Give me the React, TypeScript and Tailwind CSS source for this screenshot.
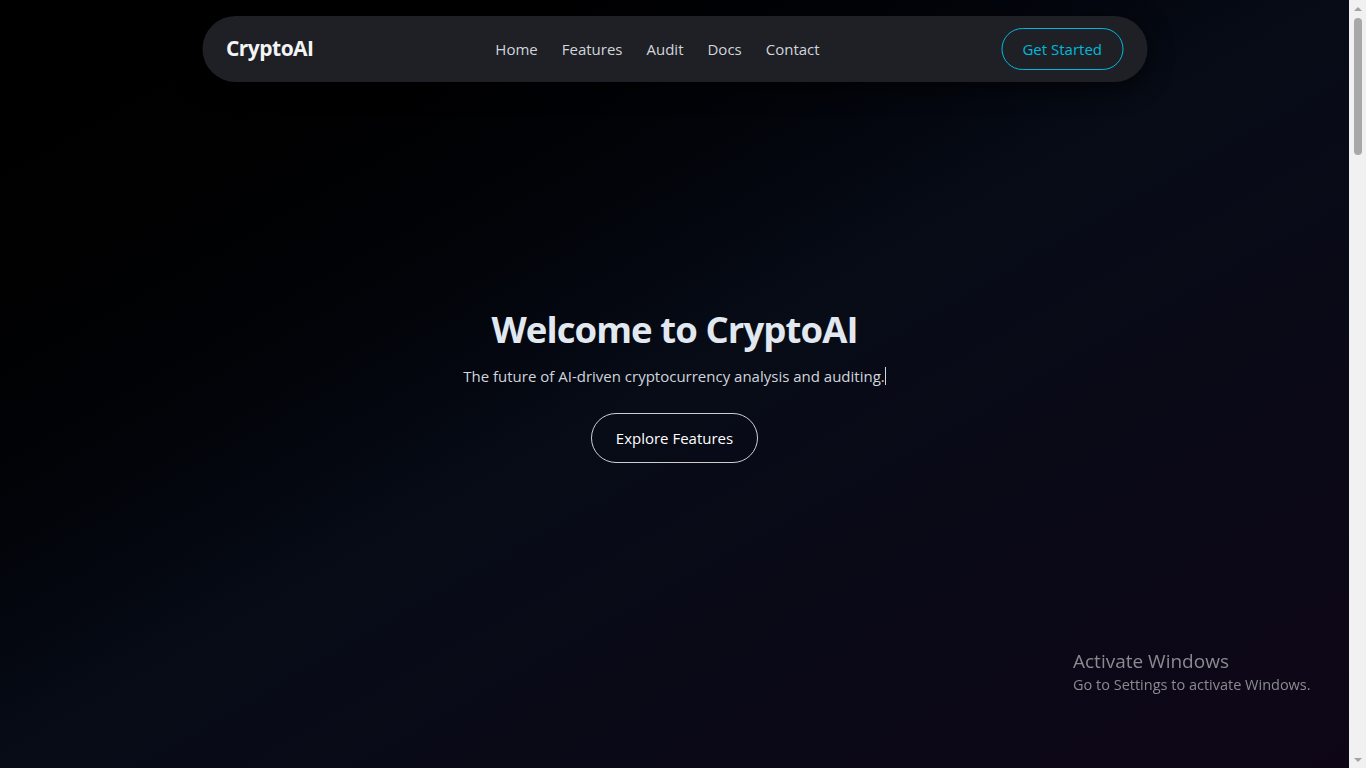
import React from "react";

const links = ["Home", "Features", "Audit", "Docs", "Contact"];

const Navbar = () => {
  return (
    <header className="absolute top-4 left-1/2 -translate-x-1/2 z-20 w-[945px] h-[66px] rounded-full bg-[#1e2025] shadow-[0_6px_24px_rgba(0,0,0,0.6)] px-6 flex items-center justify-between">
      <span className="text-[21px] font-bold text-gray-100 tracking-tight">CryptoAI</span>
      <nav className="flex items-center gap-6">
        {links.map((l) => (
          <a key={l} href="#" className="text-[15px] text-gray-300 hover:text-white">
            {l}
          </a>
        ))}
      </nav>
      <button className="h-[42px] px-5 rounded-full border border-cyan-500 text-[15px] text-cyan-500">
        Get Started
      </button>
    </header>
  );
};

// the page's scrollbar, as seen in the capture
const ScrollBar = () => {
  return (
    <div className="w-[17px] h-screen shrink-0 bg-[#f1f1f1] flex flex-col items-center">
      <div className="h-[17px] flex items-center justify-center">
        <div className="w-0 h-0 border-l-4 border-r-4 border-b-4 border-transparent border-b-[#a3a3a3]" />
      </div>
      <div className="mt-px w-2 h-[137px] rounded-full bg-[#a8a8a8]" />
      <div className="flex-1" />
      <div className="h-[17px] flex items-center justify-center">
        <div className="w-0 h-0 border-l-4 border-r-4 border-t-4 border-transparent border-t-[#a3a3a3]" />
      </div>
    </div>
  );
};

const App = () => {
  return (
    <div className="h-screen flex overflow-hidden bg-[#06080f] font-['Open_Sans','Noto_Sans',sans-serif]">
      <main className="flex-1 h-screen overflow-y-auto [scrollbar-width:none]">
        <section className="relative h-screen pt-1 flex flex-col items-center justify-center bg-linear-to-br from-black via-[#070c17] to-[#0e0617]">
          <Navbar />
          <h1 className="text-[36.5px] leading-10 font-bold text-slate-200 tracking-tight">Welcome to CryptoAI</h1>
          <p className="mt-4 text-[15px] text-gray-300">
            The future of AI-driven cryptocurrency analysis and auditing.
            <span className="inline-block w-px h-[18px] bg-gray-300 align-middle -mt-1" />
          </p>
          <button className="mt-[26px] h-[50px] px-6 rounded-full border border-white/80 text-[15px] text-white">
            Explore Features
          </button>
        </section>

        <section className="h-[3347px] bg-[#06080f]" />
      </main>

      <ScrollBar />

      <div className="fixed left-[1073px] top-[650px] z-30 text-[#8a8a8f] leading-tight pointer-events-none">
        <div className="text-[19px]">Activate Windows</div>
        <div className="text-[14.5px] mt-[2px]">Go to Settings to activate Windows.</div>
      </div>
    </div>
  );
};

export default App;
